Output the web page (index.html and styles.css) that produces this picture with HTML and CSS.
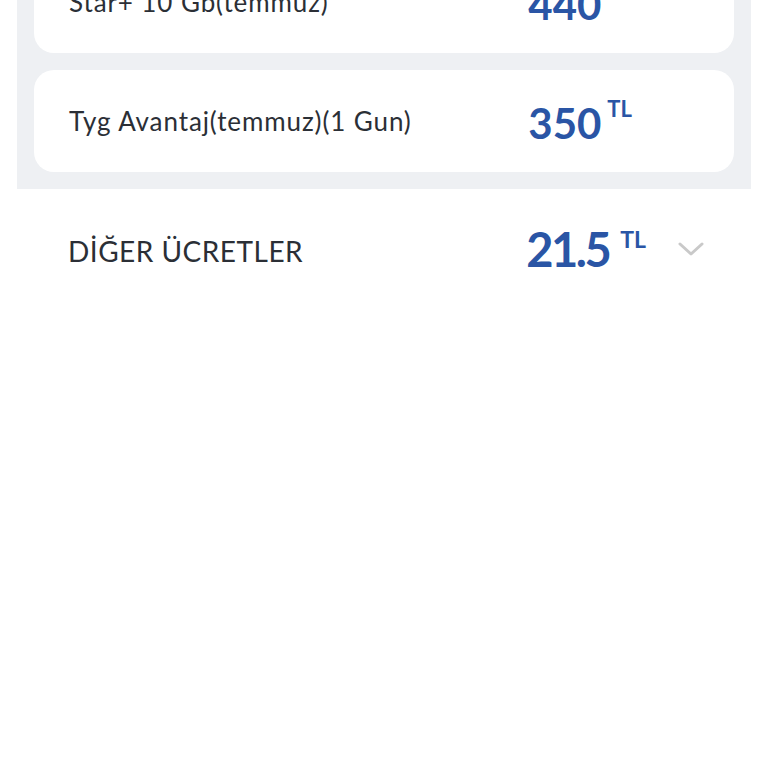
FILE: index.html
```html
<!DOCTYPE html>
<html lang="tr">
<head>
  <meta charset="UTF-8">
  <meta name="viewport" content="width=device-width, initial-scale=1.0">
  <title>Fatura Detayı</title>
  <link rel="stylesheet" href="styles.css">
</head>
<body>

<div class="panel">
  <div class="card">
    <span class="card-label">Star+ 10 Gb(temmuz)</span>
    <span class="price">
      <span class="amount">440</span>
      <span class="unit">TL</span>
    </span>
  </div>
  <div class="card">
    <span class="card-label">Tyg Avantaj(temmuz)(1 Gun)</span>
    <span class="price">
      <span class="amount">350</span>
      <span class="unit">TL</span>
    </span>
  </div>
</div>

<div class="other">
  <span class="other-label">DİĞER ÜCRETLER</span>
  <span class="price price-big">
    <span class="amount">21.5</span>
    <span class="unit">TL</span>
  </span>
  <svg class="chevron" width="26" height="16" viewBox="0 0 26 16">
    <path d="M2 3 L13 13 L24 3" fill="none" stroke="#c9c9c9" stroke-width="3" stroke-linecap="round" stroke-linejoin="round"/>
  </svg>
</div>

</body>
</html>
```

FILE: styles.css
```css
/* Genel */
body {
  margin: 0;
  background: #ffffff;
  font-family: 'Lato', 'Noto Sans', sans-serif;
  color: #2b2f36;
}

/* Gri kutu - sayfa biraz kaydırılmış durumda */
.panel {
  margin: -49px 17px 0;
  padding: 0 17px 17px;
  background: #eef0f3;
  display: flex;
  flex-direction: column;
  gap: 17px;
}

.card {
  height: 102px;
  background: #ffffff;
  border-radius: 20px;
  display: flex;
  align-items: center;
  padding: 0 102px 0 35px;
}

.card-label {
  flex: 1;
  font-size: 26px;
  letter-spacing: 0.9px;
  line-height: 1;
}

/* Fiyat */
.price {
  display: flex;
  align-items: flex-start;
  color: #2a55a5;
}

.amount {
  font-size: 42px;
  font-weight: 700;
  line-height: 1;
  margin-top: 4px;
}

.unit {
  font-size: 22px;
  font-weight: 700;
  line-height: 1;
  margin-left: 6px;
}

/* Diğer ücretler satırı */
.other {
  margin: 0 17px;
  height: 120px;
  display: flex;
  align-items: center;
  padding: 0 47px 0 51px;
}

.other-label {
  flex: 1;
  font-size: 28px;
  letter-spacing: 0.5px;
  line-height: 1;
  margin-top: 3px;
}

.price-big .amount {
  font-size: 47px;
  letter-spacing: -2.5px;
  margin-top: 0;
}

.price-big .unit {
  font-size: 23px;
  margin-left: 11px;
  margin-top: 2px;
}

.chevron {
  margin-left: 32px;
}
```
